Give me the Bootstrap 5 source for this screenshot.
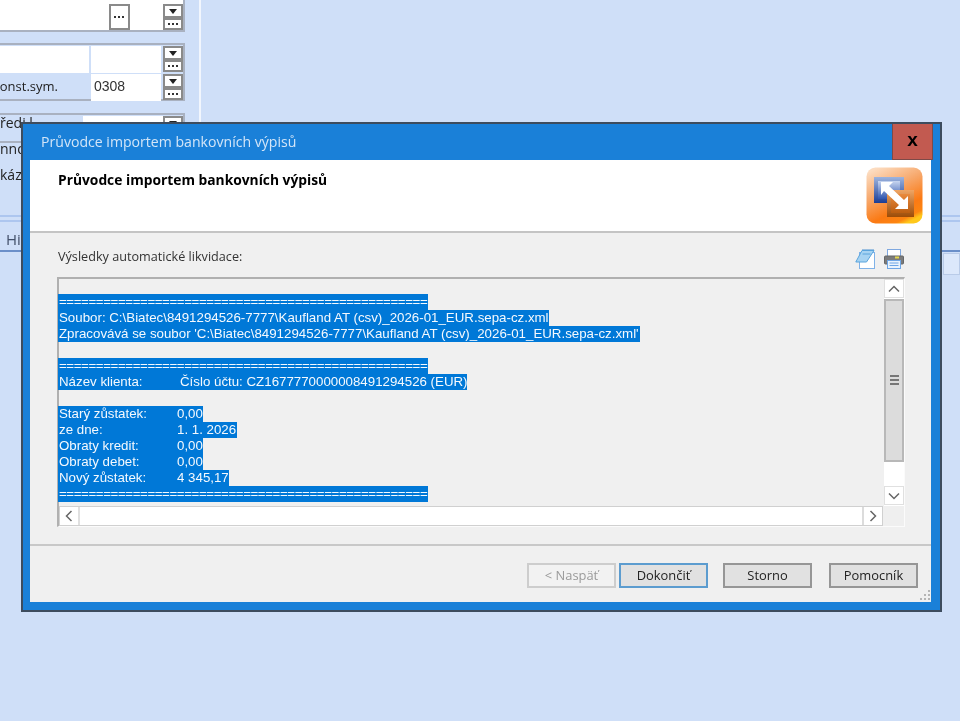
<!DOCTYPE html>
<html lang="cs">
<head>
<meta charset="utf-8">
<title>Průvodce importem bankovních výpisů</title>
<link rel="stylesheet" href="https://cdn.jsdelivr.net/npm/bootstrap@5.3.0/dist/css/bootstrap.min.css">
<style>
html,body{height:721px;overflow:hidden}
body{background:#cfdff8;font-family:"Liberation Sans",sans-serif;font-size:13px;color:#222;position:relative}
.desk{width:960px;height:721px;overflow:hidden;filter:blur(.35px)}
.form-side{width:201px;height:122px;border-right:2px solid #f2f6fd;padding-right:15px}
.fpanel{background:#cfdff8;border:2px solid #a9b1c0;border-left:0;width:185px}
.fp1{height:32px;background:#fff;border-top:0;padding:4px 0 0 109px}
.fp2{height:58px;margin-top:11px;padding-top:1px}
.fp3{height:30px;margin-top:12px;padding-top:1px}
.frow{height:28px;gap:2px;align-items:flex-start}
.finput{background:#fff;height:27px;line-height:24px;padding-left:3px;font-size:14px;color:#333}
.fw89{width:89px}.fw70{width:70px}.fw82{width:80px;margin-left:auto}
.flabel{width:89px;height:27px;line-height:25px;padding-right:31px;font-size:13px;white-space:nowrap;font-family:"Open Sans",sans-serif;display:flex;justify-content:flex-end}
.pair{width:20px;margin-top:0}
.mini{width:20px;height:14px;background:#fff;border:2px solid #8a8a8a;display:flex;align-items:center;justify-content:center;margin-bottom:0}
.mini+.mini{height:12px}
.tri{width:0;height:0;border:4px solid transparent;border-top:5px solid #222;border-bottom:0}
.dots{width:10px;height:2px;background:repeating-linear-gradient(90deg,#333 0 2px,transparent 2px 4px)}
.dotbtn{width:21px;height:26px;background:#fff;border:2px solid #8a8a8a;display:flex;align-items:center;justify-content:center}
.gap55{width:34px}
.bg-labels{position:absolute;left:0;top:110px;font-family:"Open Sans",sans-serif;font-size:14px;color:#222;line-height:26px;white-space:nowrap}
.stripes{position:absolute;left:0;right:0;top:215px;height:7px;border-top:2px solid #adc6ef;border-bottom:2px solid #adc6ef}
.left-hi{position:absolute;left:6px;top:228px;font-family:"Open Sans",sans-serif;font-size:15px;color:#42506a}
.deep-line{position:absolute;left:0;right:0;top:250px;border-top:2px solid #6b8fc9}
.right-box{position:absolute;left:943px;right:0;top:253px;height:22px;background:#dce8fb;border:1px solid #b9cbe8}
.wizard{position:absolute;left:21px;top:122px;width:921px;height:490px;background:#1a80d8;border:2px solid #3d4c5e;padding:0 9px 8px 7px;filter:blur(.35px)}
.wz-title{height:36px;color:#d3e5f8;font-family:"Open Sans",sans-serif;font-size:14.1px;padding-left:11px;padding-bottom:1px}
.wz-close{position:absolute;right:7px;top:0;width:41px;height:36px;background:#c25a50;border:1px solid #7d4a48;border-top:0;color:#000;font-weight:700;font-size:19px;line-height:32px;text-align:center;font-family:"Liberation Sans",sans-serif}
.wz-client{background:#f0f0f0;height:442px}
.wz-head{height:73px;background:#fff;border-bottom:2px solid #c4c4c4;padding:0 8px 0 28px}
.wz-headtxt{font-family:"Open Sans",sans-serif;font-weight:700;font-size:13.8px;color:#000;padding-top:10px}
.wz-logo{margin-top:7px}
.wz-bar{height:44px;padding:14px 27px 0 28px}
.wz-lbl{font-family:"Open Sans",sans-serif;font-size:12.65px;color:#333;line-height:18px}
.wz-tools{gap:8px;margin-top:2px}
.logbox{height:250px;margin:0 26px 0 27px;border-top:2px solid #b0b0b0;border-left:2px solid #b0b0b0;border-right:1px solid #fbfbfb;border-bottom:1px solid #fbfbfb;background:#f0f0f0}
.logtop{height:228px}
.logtext{padding-top:15px;line-height:16px;font-size:13.3px;white-space:nowrap;overflow:hidden;min-width:0;color:#fff;margin-left:-1px}
.logrow{height:16px;display:block}
.sel{background:#0078d7;color:#f4f9fe;display:inline-block;height:16px;line-height:16px;vertical-align:top;white-space:nowrap;padding-left:1px}
.eqs{width:370px;letter-spacing:-.4px}
.s549{width:491px}.s640{width:582px}.s467{width:409px}.s203{width:145px}.s237{width:179px}.s229{width:171px}
.tab1{display:inline-block;width:118px}
.tab2{width:121px}
.vscroll{width:20px;background:#fff}
.sb-btn{width:20px;height:19px;background:#fff;border:1px solid #e0e0e0;display:flex;align-items:center;justify-content:center}
.sb-thumb{height:163px;background:#dcdcdc;border:2px solid #b8b8b8;margin-top:1px;display:flex;align-items:center;justify-content:center}
.sb-track{height:24px;background:#fff}
.grip3{width:9px;height:11px;background:repeating-linear-gradient(180deg,#777 0 2px,transparent 2px 4px)}
.logbot{height:20px}
.hscroll{background:#fff;border:1px solid #d0d0d0;height:20px}
.hbtn{width:20px;height:18px;display:flex;align-items:center;justify-content:center;background:#fff}
.hbtn:first-child{border-right:2px solid #e0e0e0}
.hbtn:last-child{border-left:2px solid #dcdcdc}
.corner{width:21px;background:#efefef}
.wz-sep{border-top:2px solid #c8c8c8;margin-top:17px}
.wz-foot{padding-top:17px;padding-right:13px;position:relative;height:56px}
.wbtn{width:89px;height:25px;background:#e1e1e1;border:2px solid #969696;font-family:"Open Sans",sans-serif;font-size:12.9px;color:#222;padding:0;line-height:21px;border-radius:0;text-align:center}
.wbtn.off{background:#f2f2f2;border-color:#cdcdcd;color:#9a9a9a}
.wbtn.def{border-color:#5c9ccf;margin-left:3px}
.m15{margin-left:15px}.m17{margin-left:17px}
.wz-grip{position:absolute;right:1px;bottom:2px}
</style>
</head>
<body>
<div class="desk">
  <div class="form-side">
    <div class="fpanel fp1 d-flex">
      <div class="dotbtn"><span class="dots"></span></div>
      <div class="gap55"></div>
      <div class="pair"><div class="mini"><span class="tri"></span></div><div class="mini"><span class="dots"></span></div></div>
    </div>
    <div class="fpanel fp2">
      <div class="d-flex frow">
        <div class="finput fw89"></div>
        <div class="finput fw70"></div>
        <div class="pair"><div class="mini"><span class="tri"></span></div><div class="mini"><span class="dots"></span></div></div>
      </div>
      <div class="d-flex frow">
        <div class="flabel">onst.sym.</div>
        <div class="finput fw70">0308</div>
        <div class="pair"><div class="mini"><span class="tri"></span></div><div class="mini"><span class="dots"></span></div></div>
      </div>
    </div>
    <div class="fpanel fp3 d-flex">
      <div class="finput fw82"></div>
      <div class="pair"><div class="mini"><span class="tri"></span></div></div>
    </div>
  </div>
  <div class="bg-labels"><div>ředi l</div><div>nno</div><div>káz</div></div>
  <div class="stripes"></div>
  <div class="left-hi">Hi</div>
  <div class="deep-line"></div>
  <div class="right-box"></div>
</div>

<div class="wizard">
  <div class="wz-title d-flex align-items-center">Průvodce importem bankovních výpisů</div>
  <div class="wz-close">x</div>
  <div class="wz-client">
    <div class="wz-head d-flex justify-content-between align-items-start">
      <div class="wz-headtxt">Průvodce importem bankovních výpisů</div>
      <svg class="wz-logo" width="57" height="57" viewBox="0 0 57 57">
        <defs>
          <linearGradient id="og" x1=".2" y1="0" x2=".7" y2="1"><stop offset="0" stop-color="#fcdcc0"/><stop offset=".4" stop-color="#f7a76a"/><stop offset=".75" stop-color="#fb7a14"/><stop offset=".92" stop-color="#fd8510"/><stop offset="1" stop-color="#ffc81a"/></linearGradient>
          <linearGradient id="bl" x1="0" y1="0" x2="0" y2="1"><stop offset="0" stop-color="#9db4de"/><stop offset="1" stop-color="#1c3d94"/></linearGradient>
          <linearGradient id="bli" x1="0" y1="0" x2="0" y2="1"><stop offset="0" stop-color="#c8d6f0"/><stop offset="1" stop-color="#2f55ae"/></linearGradient>
          <linearGradient id="br" x1="0" y1="0" x2="0" y2="1"><stop offset="0" stop-color="#efa564"/><stop offset="1" stop-color="#9c4c08"/></linearGradient>
          <linearGradient id="bri" x1="0" y1="0" x2="0" y2="1"><stop offset="0" stop-color="#e98a3c"/><stop offset="1" stop-color="#bb5d10"/></linearGradient>
        </defs>
        <rect x="0.5" y="0.5" width="56" height="56" rx="9" fill="url(#og)"/>
        <rect x="8" y="10" width="30" height="26" fill="url(#bl)"/>
        <rect x="12" y="14" width="22" height="18" fill="url(#bli)"/>
        <rect x="21" y="23" width="27" height="27" fill="url(#br)"/>
        <rect x="25" y="27" width="19" height="19" fill="url(#bri)"/>
        <path d="M15 15h12l-4 4 15 14 4-4v13H29l4-4-15-14-3 4z" fill="#fff"/>
      </svg>
    </div>
    <div class="wz-bar d-flex justify-content-between align-items-start">
      <div class="wz-lbl">Výsledky automatické likvidace:</div>
      <div class="wz-tools d-flex">
        <svg width="21" height="20" viewBox="0 0 21 20">
          <rect x="4.500" y="3.500" width="15" height="16" fill="#fff" stroke="#7fb2e8"/>
          <path d="M7 1.500h12L11.500 13H0.800z" fill="#a6d3f2" stroke="#5aa4dc"/>
          <path d="M8 1v-1M10 1v-1M12 1v-1M14 1v-1M16 1v-1M18 1v-1" stroke="#4a90d0"/>
          <path d="M7.500 5h8" stroke="#5aa4dc"/>
        </svg>
        <svg width="20" height="20" viewBox="0 0 20 20">
          <rect x="3.500" y="0.500" width="13" height="8" fill="#fff" stroke="#7fa8e0"/>
          <rect x="0.500" y="7" width="19" height="8" rx="1" fill="#7b7b7b" stroke="#666"/>
          <rect x="11" y="7.500" width="4" height="2" fill="#e6d84c"/>
          <rect x="3.500" y="11.500" width="13" height="8" fill="#e9f3fd" stroke="#6ea6e6"/>
          <path d="M5.500 14h9M5.500 16.500h9" stroke="#6ea6e6"/>
        </svg>
      </div>
    </div>
    <div class="logbox d-flex flex-column">
      <div class="logtop d-flex">
        <div class="logtext flex-grow-1">
          <span class="logrow"><span class="sel eqs">==================================================</span></span>
          <span class="logrow"><span class="sel s549">Soubor: C:\Biatec\8491294526-7777\Kaufland AT (csv)_2026-01_EUR.sepa-cz.xml</span></span>
          <span class="logrow"><span class="sel s640">Zpracovává se soubor 'C:\Biatec\8491294526-7777\Kaufland AT (csv)_2026-01_EUR.sepa-cz.xml'</span></span>
          <span class="logrow"></span>
          <span class="logrow"><span class="sel eqs">==================================================</span></span>
          <span class="logrow"><span class="sel s467"><span class="tab1 tab2">Název klienta:</span>Číslo účtu: CZ1677770000008491294526 (EUR)</span></span>
          <span class="logrow"></span>
          <span class="logrow"><span class="sel s203"><span class="tab1">Starý zůstatek:</span>0,00</span></span>
          <span class="logrow"><span class="sel s237"><span class="tab1">ze dne:</span>1. 1. 2026</span></span>
          <span class="logrow"><span class="sel s203"><span class="tab1">Obraty kredit:</span>0,00</span></span>
          <span class="logrow"><span class="sel s203"><span class="tab1">Obraty debet:</span>0,00</span></span>
          <span class="logrow"><span class="sel s229"><span class="tab1">Nový zůstatek:</span>4 345,17</span></span>
          <span class="logrow"><span class="sel eqs">==================================================</span></span>
        </div>
        <div class="vscroll">
          <div class="sb-btn"><svg width="12" height="8" viewBox="0 0 12 8"><path d="M1 6.500l5-5 5 5" fill="none" stroke="#666" stroke-width="1.500"/></svg></div>
          <div class="sb-thumb"><span class="grip3"></span></div>
          <div class="sb-track"></div>
          <div class="sb-btn"><svg width="12" height="8" viewBox="0 0 12 8"><path d="M1 1.500l5 5 5-5" fill="none" stroke="#666" stroke-width="1.500"/></svg></div>
        </div>
      </div>
      <div class="logbot d-flex">
        <div class="hscroll d-flex justify-content-between flex-grow-1">
          <div class="hbtn"><svg width="8" height="12" viewBox="0 0 8 12"><path d="M6.500 1l-5 5 5 5" fill="none" stroke="#666" stroke-width="1.500"/></svg></div>
          <div class="hbtn"><svg width="8" height="12" viewBox="0 0 8 12"><path d="M1.500 1l5 5-5 5" fill="none" stroke="#666" stroke-width="1.500"/></svg></div>
        </div>
        <div class="corner"></div>
      </div>
    </div>
    <div class="wz-sep"></div>
    <div class="wz-foot d-flex justify-content-end">
      <button type="button" class="btn wbtn off">&lt; Naspäť</button>
      <button type="button" class="btn wbtn def">Dokončiť</button>
      <button type="button" class="btn wbtn m15">Storno</button>
      <button type="button" class="btn wbtn m17">Pomocník</button>
      <svg class="wz-grip" width="11" height="11" viewBox="0 0 11 11"><g fill="#b5b5b5"><rect x="9" y="1" width="2" height="2"/><rect x="5" y="5" width="2" height="2"/><rect x="9" y="5" width="2" height="2"/><rect x="1" y="9" width="2" height="2"/><rect x="5" y="9" width="2" height="2"/><rect x="9" y="9" width="2" height="2"/></g></svg>
    </div>
  </div>
</div>
<script src="https://cdn.jsdelivr.net/npm/bootstrap@5.3.0/dist/js/bootstrap.bundle.min.js"></script>
</body>
</html>
